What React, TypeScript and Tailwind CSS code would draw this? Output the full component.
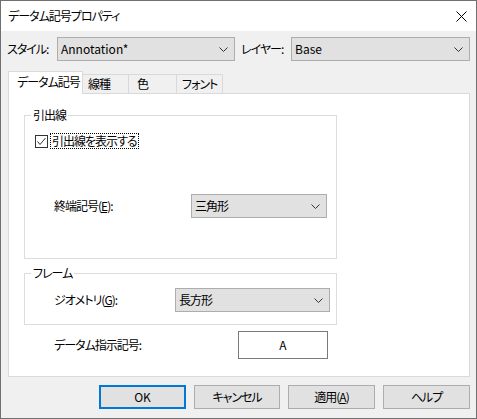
const font = "[font-family:'Noto_Sans_CJK_JP','Noto_Sans',sans-serif] [font-feature-settings:'palt']";

const Chevron = () => (
  <svg width="9" height="5" viewBox="0 0 9 5" className="shrink-0">
    <polyline points="0.5,0.5 4.5,4.5 8.5,0.5" fill="none" stroke="#333" strokeWidth="1" />
  </svg>
);

const Select = ({ value, className }: { value: React.ReactNode; className: string }) => (
  <div
    className={`flex items-center justify-between border border-[#adadad] bg-[#e1e1e1] pl-[3px] pr-[6px] ${className}`}
  >
    <span>{value}</span>
    <Chevron />
  </div>
);

const Tab = ({ label, width }: { label: string; width: string }) => (
  <div className={`flex h-[19px] items-center whitespace-nowrap border-t border-r border-[#d9d9d9] pl-[5px] ${width}`}>
    {label}
  </div>
);

const Group = ({ title, className, children }: { title: string; className: string; children?: React.ReactNode }) => (
  <div className={`relative border border-[#dcdcdc] ${className}`}>
    <span className="absolute -top-[9px] left-[6px] bg-white px-[2px] leading-[16px]">{title}</span>
    {children}
  </div>
);

const Button = ({ children, primary, width = "w-[87px]" }: { children: React.ReactNode; primary?: boolean; width?: string }) => (
  <div
    className={`flex h-[24px] items-center justify-center bg-[#e1e1e1] ${width} ${
      primary ? "border-2 border-[#0078d7]" : "border border-[#adadad]"
    }`}
  >
    {children}
  </div>
);

const Latin = ({ children }: { children: React.ReactNode }) => <span className="tracking-normal">{children}</span>;

export default function App() {
  return (
    <div
      className={`flex h-[419px] w-[477px] flex-col border border-[#707070] bg-[#f0f0f0] text-[12px] leading-none tracking-[-1px] text-black ${font}`}
    >
      {/* title bar */}
      <div className="flex h-[30px] shrink-0 items-center justify-between bg-white pl-[7px] pr-[9px]">
        <span>データム記号プロパティ</span>
        <svg width="11" height="11" viewBox="0 0 11 11">
          <path d="M0.5 0.5 L10.5 10.5 M10.5 0.5 L0.5 10.5" stroke="#000" strokeWidth="1" />
        </svg>
      </div>

      {/* style / layer */}
      <div className="mt-[6px] flex h-[24px] items-center pl-[6px]">
        <span className="w-[50px]">スタイル:</span>
        <Select value={<Latin>Annotation*</Latin>} className="h-[24px] w-[178px]" />
        <span className="ml-[6px] w-[50px]">レイヤー:</span>
        <Select value={<Latin>Base</Latin>} className="h-[24px] w-[179px]" />
      </div>

      {/* tabs */}
      <div className="ml-[7px] mt-[10px] flex h-[22px] items-end">
        <div className="relative z-10 -mb-px flex h-[23px] w-[75px] items-center whitespace-nowrap border border-b-0 border-[#d9d9d9] bg-white pb-[2px] pl-[8px]">
          データム記号
        </div>
        <Tab label="線種" width="w-[46px]" />
        <Tab label="色" width="w-[48px] pl-[8px]" />
        <Tab label="フォント" width="w-[46px]" />
      </div>

      {/* panel */}
      <div className="ml-[7px] h-[284px] w-[462px] border border-[#d9d9d9] bg-white pl-[15px] pt-[21px]">
        <Group title="引出線" className="flex h-[144px] w-[313px] flex-col">
          <div className="ml-[10px] mt-[17px] flex h-[16px] items-center">
            <div className="flex h-[13px] w-[13px] items-center justify-center border border-[#333]">
              <svg width="11" height="11" viewBox="0 0 11 11">
                <polyline points="1.5,5.5 4,8.5 9.5,2" fill="none" stroke="#333" strokeWidth="1" />
              </svg>
            </div>
            <span className="ml-[2px] flex h-[16px] items-center border border-dotted border-black px-[1px]">
              引出線を表示する
            </span>
          </div>
          <div className="ml-[29px] mt-[45px] flex items-center">
            <span className="w-[137px]">
              終端記号(<span className="underline">E</span>):
            </span>
            <Select value="三角形" className="h-[24px] w-[136px]" />
          </div>
        </Group>

        <Group title="フレーム" className="mt-[14px] h-[52px] w-[313px]">
          <div className="ml-[29px] mt-[14px] flex items-center">
            <span className="w-[121px]">
              ジオメトリ(<span className="underline">G</span>):
            </span>
            <Select value="長方形" className="h-[24px] w-[155px]" />
          </div>
        </Group>

        <div className="ml-[30px] mt-[6px] flex items-center">
          <span className="w-[184px]">データム指示記号:</span>
          <div className="flex h-[28px] w-[90px] items-center justify-center border border-[#7a7a7a] bg-white">
            <Latin>A</Latin>
          </div>
        </div>
      </div>

      {/* buttons */}
      <div className="mr-[6px] mt-[8px] flex justify-end gap-[8px]">
        <Button primary>
          <Latin>OK</Latin>
        </Button>
        <Button width="w-[86px]">キャンセル</Button>
        <Button>
          適用(<span className="underline">A</span>)
        </Button>
        <Button>ヘルプ</Button>
      </div>
    </div>
  );
}
